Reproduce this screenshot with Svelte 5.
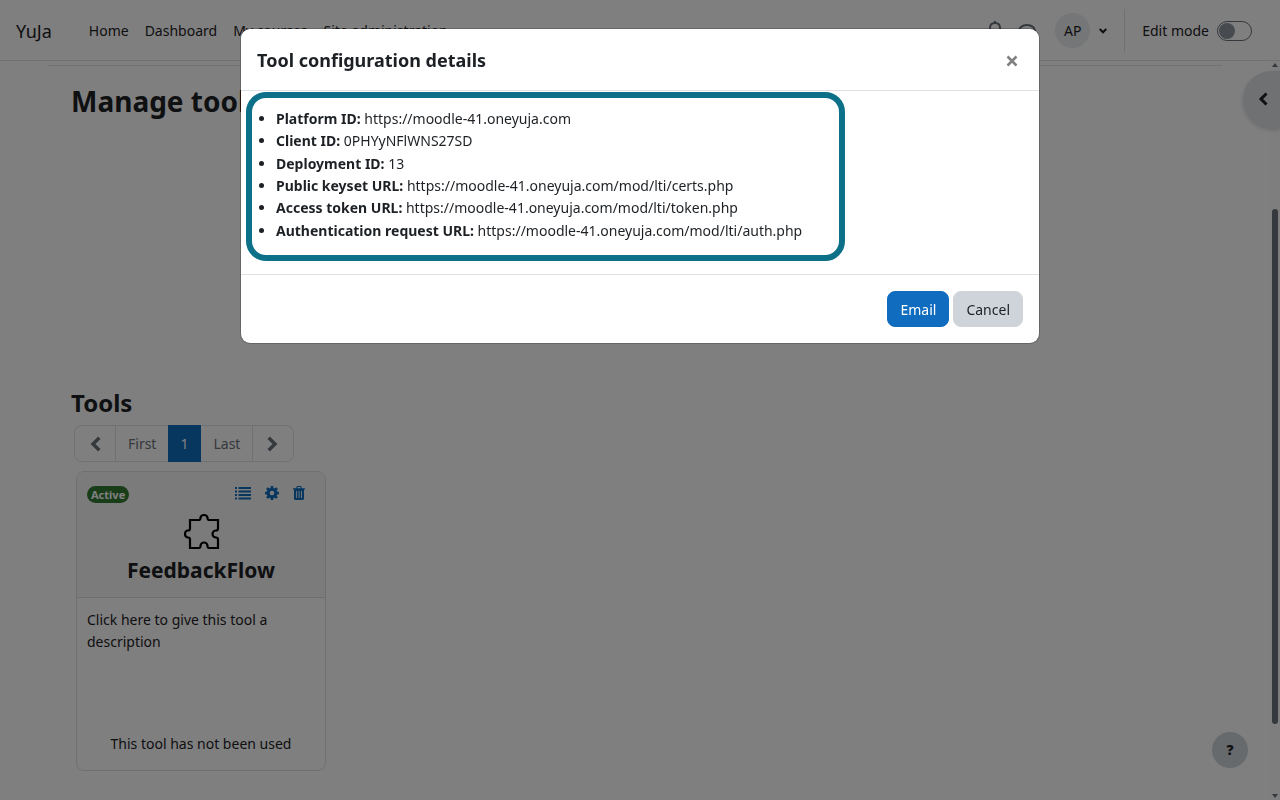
<script>
  const nav = ['Home', 'Dashboard', 'My courses', 'Site administration'];
  const details = [
    ['Platform ID:', 'https://moodle-41.oneyuja.com'],
    ['Client ID:', '0PHYyNFlWNS27SD'],
    ['Deployment ID:', '13'],
    ['Public keyset URL:', 'https://moodle-41.oneyuja.com/mod/lti/certs.php'],
    ['Access token URL:', 'https://moodle-41.oneyuja.com/mod/lti/token.php'],
    ['Authentication request URL:', 'https://moodle-41.oneyuja.com/mod/lti/auth.php']
  ];
  let editMode = $state(false);
  let open = $state(true);
</script>

<div class="page">
  <header class="navbar">
    <a class="brand" href="#top">YuJa</a>
    <nav>
      {#each nav as item}
        <a href="#top">{item}</a>
      {/each}
    </nav>
    <div class="tools-right">
      <button class="plain icon" aria-label="Notifications">
        <svg width="18" height="20" viewBox="0 0 18 20" fill="none" stroke="currentColor" stroke-width="2"><path d="M9 0v2M4 15V7c0-3 2-5 5-5s5 2 5 5v8l2 1H2zM7 18h4" /></svg>
      </button>
      <button class="plain icon" aria-label="Messages">
        <svg width="20" height="20" viewBox="0 0 20 20" fill="none" stroke="currentColor" stroke-width="2"><path d="M10 4c5 0 8 3 8 6s-3 7-8 7l-5 1 1-2c-3-1-4-3-4-6 0-3 3-6 8-6z" /></svg>
      </button>
      <button class="plain user" aria-label="User menu">
        <span class="avatar">AP</span>
        <svg width="8" height="6" viewBox="0 0 8 6" fill="none" stroke="currentColor" stroke-width="2"><path d="M0.7 1l3.3 3.3L7.3 1" /></svg>
      </button>
      <label class="edit">
        <span>Edit mode</span>
        <input type="checkbox" role="switch" bind:checked={editMode} />
      </label>
    </div>
  </header>

  <div class="body">
    <main>
      <h1>Manage tools</h1>
      <section>
        <h2>Tools</h2>
        <div class="pager">
          <button aria-label="Previous page"><svg width="11" height="16" viewBox="0 0 11 16" fill="none" stroke="currentColor" stroke-width="3.4"><path d="M9.3 1.8L3 8l6.300 6.200" /></svg></button>
          <button>First</button>
          <button class="current">1</button>
          <button>Last</button>
          <button aria-label="Next page"><svg width="11" height="16" viewBox="0 0 11 16" fill="none" stroke="currentColor" stroke-width="3.4"><path d="M1.700 1.800L8 8l-6.300 6.200" /></svg></button>
        </div>
        <article class="card">
          <div class="card-head">
            <div class="card-bar">
              <span class="badge">Active</span>
              <div class="actions">
                <button class="plain" aria-label="View configuration details">
                  <svg width="16" height="14" viewBox="0 0 16 14" fill="currentColor"><path d="M0 1h2v2H0zM0 4.500h2v2H0zM0 8h2v2H0zM0 11.500h2v2H0zM3.500 1H16v2H3.500zM3.500 4.500H16v2H3.500zM3.500 8H16v2H3.500zM3.500 11.500H16v2H3.500z" /></svg>
                </button>
                <button class="plain" aria-label="Edit">
                  <svg width="14" height="14" viewBox="0 0 14 14" fill="currentColor"><path fill-rule="evenodd" d="M5.900 0h2.200l.4 1.900 1.100.5 1.700-1.100 1.500 1.500-1.100 1.700.5 1.100 1.800.4v2.200l-1.800.3-.5 1.100 1.100 1.700-1.500 1.500-1.700-1.100-1.100.5-.4 1.800H5.900l-.4-1.800-1.100-.5-1.700 1.100-1.500-1.500 1.100-1.700-.5-1.100L0 8.200V6l1.800-.4.5-1.100-1.100-1.700 1.500-1.500 1.700 1.100 1.100-.5zM7 4.700a2.300 2.300 0 1 0 0 4.600 2.300 2.300 0 0 0 0-4.600z" /></svg>
                </button>
                <button class="plain" aria-label="Delete">
                  <svg width="12" height="14" viewBox="0 0 12 14" fill="currentColor"><path fill-rule="evenodd" d="M0 2.300h3L4 0h4l1 2.300h3v1.200h-1V13l-1 1H2l-1-1V3.500H0zm4.200 0h3.600L7.300 1.100H4.700zM3.200 5v7h.9V5zm2.400 0v7h.9V5zM8 5v7h.9V5z" /></svg>
                </button>
              </div>
            </div>
            <svg class="puzzle" width="36" height="36" viewBox="0 0 36 36" fill="none" stroke="#000" stroke-width="2.200"><path d="M6 6h8.500c1.500 0 2-.5 2-2a3.500 3 0 0 1 7 0c0 1.500.5 2 2 2H34v8.500c0 1.500-.5 2-2 2a3.500 3.500 0 0 0 0 7c1.500 0 2 .5 2 2V34h-8.500c-1.500 0-2-.5-2-2a3.500 3.500 0 0 0-7 0c0 1.500-.5 2-2 2H6v-8.500c0-1.500-.5-2-2-2a3 3.500 0 0 1 0-7c1.500 0 2-.5 2-2z" /></svg>
            <h3>FeedbackFlow</h3>
          </div>
          <div class="card-body">
            <p>Click here to give this tool a description</p>
            <p class="usage">This tool has not been used</p>
          </div>
        </article>
      </section>
    </main>
    <div class="rail" aria-hidden="true">
      <span class="up"></span>
      <span class="thumb"></span>
      <span class="down"></span>
    </div>
    <button class="drawer" aria-label="Open block drawer">
      <svg width="10" height="14" viewBox="0 0 10 14" fill="none" stroke="currentColor" stroke-width="3"><path d="M8.500 1.500L3 7l5.500 5.500" /></svg>
    </button>
    <button class="help" aria-label="Help">?</button>
  </div>
</div>

{#if open}
  <div class="backdrop">
    <div class="modal" role="dialog" aria-modal="true" aria-labelledby="dialog-title">
      <div class="modal-head">
        <h4 id="dialog-title">Tool configuration details</h4>
        <button class="plain close" aria-label="Close" onclick={() => (open = false)}>
          <svg width="12" height="12" viewBox="0 0 12 12" fill="none" stroke="currentColor" stroke-width="2.500"><path d="M1.500 1.500l9 9M10.500 1.500l-9 9" /></svg>
        </button>
      </div>
      <div class="modal-body">
        <ul>
          {#each details as [name, value]}
            <li><strong>{name}</strong> {value}</li>
          {/each}
        </ul>
      </div>
      <div class="modal-foot">
        <button class="btn primary">Email</button>
        <button class="btn" onclick={() => (open = false)}>Cancel</button>
      </div>
    </div>
  </div>
{/if}

<style>
  :global(body) {
    margin: 0;
    background: #fff;
    color: #1d2125;
    font: 14px/22px 'Noto Sans', 'Open Sans', sans-serif;
  }
  * { box-sizing: border-box; }
  h1, h2, h3, h4, p, ul { margin: 0; }
  a { color: inherit; text-decoration: none; }
  button { font: inherit; color: inherit; cursor: pointer; }
  svg { display: block; flex: none; }
  .plain { border: 0; background: none; padding: 0; }

  .page { min-height: 100vh; display: flex; flex-direction: column; }
  .navbar {
    height: 61px;
    flex: none;
    display: flex;
    align-items: center;
    padding: 1px 28px 0 16px;
    border-bottom: 1px solid #dee2e6;
  }
  .brand { font-size: 18px; margin-right: 37px; }
  nav { display: flex; gap: 16px; white-space: nowrap; }
  .tools-right { margin-left: auto; display: flex; align-items: center; align-self: stretch; }
  .icon { color: #6a737b; margin-right: 13px; }
  .user { display: flex; align-items: center; gap: 9px; margin: 0 17px 0 5px; }
  .avatar {
    width: 35px;
    height: 35px;
    border-radius: 50%;
    background: #e9ecef;
    display: grid;
    place-items: center;
  }
  .edit {
    display: flex;
    align-items: center;
    gap: 8px;
    height: 44px;
    padding-left: 17px;
    border-left: 1px solid #dee2e6;
  }
  .edit input {
    appearance: none;
    width: 35px;
    height: 20px;
    margin: 0;
    padding: 1px;
    border: 1px solid #6a737b;
    border-radius: 10px;
    display: flex;
  }
  .edit input::before {
    content: '';
    width: 16px;
    height: 16px;
    border-radius: 50%;
    background: #8f959e;
  }
  .edit input:checked { justify-content: flex-end; }

  .body { flex: 1; display: flex; position: relative; }
  main {
    flex: 1;
    margin: 4px 48px 0;
    padding: 15px 23px 29px;
    border-top: 1px solid #dee2e6;
  }
  h1 { font-size: 28px; line-height: 40px; }
  section { margin-top: 266px; }
  h2 { font-size: 24px; line-height: 32px; }
  .pager {
    display: inline-flex;
    height: 37px;
    margin: 6px 0 9px 3px;
    border: 1px solid #dee2e6;
    border-radius: 8px;
    color: #6a737b;
  }
  .pager button {
    display: flex;
    align-items: center;
    padding: 0 12px;
    border: 0;
    background: none;
  }
  .pager button:first-child { padding: 0 14px 0 15px; border-right: 1px solid #dee2e6; }
  .pager button:last-child { padding: 0 15px 0 14px; border-left: 1px solid #dee2e6; }
  .pager button.current { margin: -1px 0; padding: 0 13px 0 12px; background: #0f6cbf; color: #fff; }

  .card {
    width: 250px;
    height: 300px;
    margin-left: 5px;
    display: flex;
    flex-direction: column;
    border: 1px solid #dfdfdf;
    border-radius: 8px;
    overflow: hidden;
  }
  .card-head {
    height: 126px;
    flex: none;
    padding: 12px 10px 0;
    background: #f7f7f7;
    border-bottom: 1px solid #dfdfdf;
  }
  .card-bar { display: flex; justify-content: space-between; align-items: center; height: 20px; }
  .badge {
    padding: 0 4px;
    border-radius: 9px;
    background: #357a32;
    color: #fff;
    font-weight: 700;
    font-size: 11px;
    line-height: 17px;
  }
  .actions { display: flex; gap: 14px; margin-right: 10px; padding-bottom: 3px; color: #0f6cbf; }
  .puzzle { margin: 10px auto 3px 97px; }
  h3 { font-size: 21px; line-height: 34px; text-align: center; }
  .card-body { flex: 1; display: flex; flex-direction: column; padding: 11px 10px 15px; }
  .usage { margin-top: auto; text-align: center; }

  .rail {
    width: 10px;
    display: flex;
    flex-direction: column;
    justify-content: space-between;
    align-items: center;
    padding: 2px 0;
    background: #fcfcfc;
  }
  .up, .down { width: 6px; height: 4px; background: #6a737b; }
  .up { clip-path: polygon(50% 0, 100% 100%, 0 100%); }
  .down { clip-path: polygon(0 0, 100% 0, 50% 100%); }
  .thumb { width: 6px; height: 70%; margin-top: 72px; border-radius: 3px; background: #6a737b; }
  .drawer {
    position: absolute;
    top: 10px;
    right: 0;
    width: 37px;
    height: 57px;
    padding: 0 0 2px 15px;
    border: 0;
    border-radius: 29px 0 0 29px;
    background: #dee2e6;
    box-shadow: 0 2px 4px rgba(0, 0, 0, 0.15);
  }
  .help {
    position: absolute;
    right: 32px;
    bottom: 32px;
    width: 36px;
    height: 36px;
    padding: 0;
    border: 0;
    border-radius: 50%;
    background: #ced4da;
    font-weight: 900;
  }

  .backdrop {
    position: fixed;
    inset: 0;
    padding: 28px 16px;
    background: rgba(0, 0, 0, 0.5);
  }
  .modal {
    max-width: 800px;
    margin: 0 auto;
    background: #fff;
    background-clip: padding-box;
    border: 1px solid rgba(0, 0, 0, 0.2);
    border-radius: 10px;
  }
  .modal-head {
    display: flex;
    justify-content: space-between;
    align-items: center;
    height: 62px;
    padding: 0 21px 0 16px;
    border-bottom: 1px solid #dee2e6;
  }
  h4 { font-size: 18px; line-height: 24px; }
  .close { padding-top: 3px; color: #808080; }
  .modal-body { padding: 1px 5px 13px; }
  ul {
    width: 76%;
    min-height: 169px;
    padding: 10px 6px 13px 24px;
    display: grid;
    grid-auto-rows: 1fr;
    border: 6px solid #0b7088;
    border-radius: 20px;
  }
  .modal-foot {
    display: flex;
    justify-content: flex-end;
    gap: 4px;
    padding: 16px;
    border-top: 1px solid #dee2e6;
  }
  .btn {
    height: 36px;
    padding: 1px 12px 0;
    border: 1px solid #ced4da;
    border-radius: 8px;
    background: #ced4da;
  }
  .btn.primary { background: #0f6cbf; border-color: #0f6cbf; color: #fff; }
</style>
